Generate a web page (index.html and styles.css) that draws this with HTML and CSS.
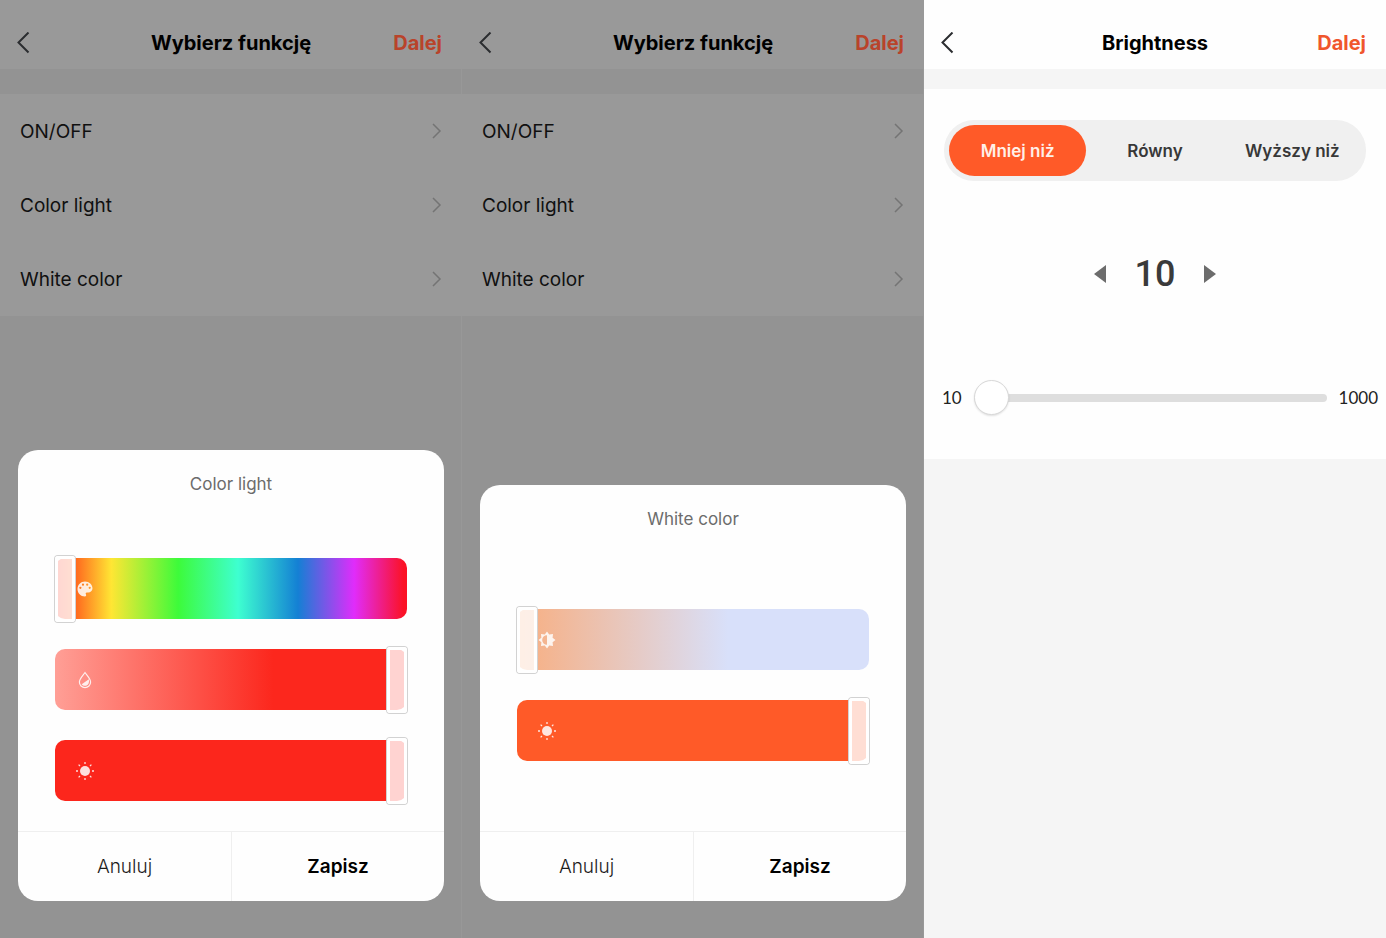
FILE: index.html
```html
<!DOCTYPE html>
<html lang="pl">
<head>
    <meta charset="UTF-8">
    <meta name="viewport" content="width=device-width, initial-scale=1.0">
    <title>Wybierz funkcję</title>
    <link rel="stylesheet" href="styles.css">
</head>
<body>
    <main class="screens">
        <section class="screen dimmed">
            <header class="topbar">
                <button type="button" class="back" aria-label="Wstecz">
                    <svg width="14" height="22" viewBox="0 0 14 22"><path d="M12.500 0.500 2.500 10.500l10 10"/></svg>
                </button>
                <h1>Wybierz funkcję</h1>
                <button type="button" class="next">Dalej</button>
            </header>
            <nav class="functions">
                <a href="#">ON/OFF <svg width="10" height="16" viewBox="0 0 10 16"><path d="m1 1 7 7-7 7"/></svg></a>
                <a href="#">Color light <svg width="10" height="16" viewBox="0 0 10 16"><path d="m1 1 7 7-7 7"/></svg></a>
                <a href="#">White color <svg width="10" height="16" viewBox="0 0 10 16"><path d="m1 1 7 7-7 7"/></svg></a>
            </nav>

            <form class="sheet">
                <h2>Color light</h2>
                <div class="sliders">
                    <div class="bar hue">
                        <svg class="bar-icon near" width="20" height="20" viewBox="0 0 20 20">
                            <path fill-rule="evenodd" d="M10 2.500c4.200 0 7.500 3 7.500 6.800 0 2.600-2 4.200-4.300 4.200h-1.400c-1 0-1.400.9-.9 1.700.6 1.100.2 2.300-1 2.300-4.200 0-7.400-3.300-7.400-7.500s3.300-7.500 7.500-7.500zM5.400 7.700a1.100 1.100 0 1 0 0 2.200 1.100 1.100 0 0 0 0-2.200zM8 4.600a1.100 1.100 0 1 0 0 2.200 1.100 1.100 0 0 0 0-2.200zm4.200 0a1.100 1.100 0 1 0 0 2.200 1.100 1.100 0 0 0 0-2.200zm2.500 3.100a1.100 1.100 0 1 0 0 2.200 1.100 1.100 0 0 0 0-2.200z"/>
                        </svg>
                        <input type="range" min="0" max="360" value="0" aria-label="Kolor">
                    </div>
                    <div class="bar saturation">
                        <svg class="bar-icon" width="20" height="20" viewBox="0 0 20 20">
                            <path class="line" d="M10 2.500c2.600 3.500 5.600 6.300 5.600 9.500a5.600 5.600 0 0 1-11.200 0c0-3.200 3-6 5.600-9.500z"/>
                            <path d="M13.900 9.200c.6 3.900-.9 6.600-3.900 6.600-1.400 0-2.600-.6-3.300-1.600z"/>
                        </svg>
                        <input type="range" min="0" max="1000" value="1000" aria-label="Nasycenie">
                    </div>
                    <div class="bar red">
                        <svg class="bar-icon" width="20" height="20" viewBox="0 0 20 20">
                            <circle cx="10" cy="10" r="5"/>
                            <path class="rays" d="M10 1v2M10 17v2M1 10h2M17 10h2M3.600 3.600 5 5M15 15l1.400 1.400M3.600 16.400 5 15M15 5l1.400-1.400"/>
                        </svg>
                        <input type="range" min="0" max="1000" value="1000" aria-label="Jasność">
                    </div>
                </div>
                <div class="actions">
                    <button type="button">Anuluj</button>
                    <button type="submit" class="save">Zapisz</button>
                </div>
            </form>
        </section>

        <section class="screen dimmed">
            <header class="topbar">
                <button type="button" class="back" aria-label="Wstecz">
                    <svg width="14" height="22" viewBox="0 0 14 22"><path d="M12.500 0.500 2.500 10.500l10 10"/></svg>
                </button>
                <h1>Wybierz funkcję</h1>
                <button type="button" class="next">Dalej</button>
            </header>
            <nav class="functions">
                <a href="#">ON/OFF <svg width="10" height="16" viewBox="0 0 10 16"><path d="m1 1 7 7-7 7"/></svg></a>
                <a href="#">Color light <svg width="10" height="16" viewBox="0 0 10 16"><path d="m1 1 7 7-7 7"/></svg></a>
                <a href="#">White color <svg width="10" height="16" viewBox="0 0 10 16"><path d="m1 1 7 7-7 7"/></svg></a>
            </nav>

            <form class="sheet">
                <h2>White color</h2>
                <div class="sliders roomy">
                    <div class="bar temperature">
                        <svg class="bar-icon near" width="20" height="20" viewBox="0 0 20 20">
                            <path fill-rule="evenodd" d="m10 1.500 2.200 2.900 3.800-.4-.4 3.800 2.900 2.200-2.900 2.200.4 3.800-3.800-.4L10 18.500l-2.200-2.900-3.800.4.4-3.800L1.500 10l2.900-2.200L4 4l3.800.4zM10 5.200a4.800 4.800 0 0 0 0 9.600z"/>
                        </svg>
                        <input type="range" min="0" max="1000" value="0" aria-label="Temperatura barwowa">
                    </div>
                    <div class="bar orange">
                        <svg class="bar-icon" width="20" height="20" viewBox="0 0 20 20">
                            <circle cx="10" cy="10" r="5"/>
                            <path class="rays" d="M10 1v2M10 17v2M1 10h2M17 10h2M3.600 3.600 5 5M15 15l1.400 1.400M3.600 16.400 5 15M15 5l1.400-1.400"/>
                        </svg>
                        <input type="range" min="0" max="1000" value="1000" aria-label="Jasność">
                    </div>
                </div>
                <div class="actions">
                    <button type="button">Anuluj</button>
                    <button type="submit" class="save">Zapisz</button>
                </div>
            </form>
        </section>

        <section class="screen">
            <header class="topbar">
                <button type="button" class="back" aria-label="Wstecz">
                    <svg width="14" height="22" viewBox="0 0 14 22"><path d="M12.500 0.500 2.500 10.500l10 10"/></svg>
                </button>
                <h1>Brightness</h1>
                <button type="button" class="next">Dalej</button>
            </header>
            <form class="brightness">
                <div class="compare">
                    <button type="button" class="active">Mniej niż</button>
                    <button type="button">Równy</button>
                    <button type="button">Wyższy niż</button>
                </div>
                <div class="stepper">
                    <button type="button" aria-label="Mniej">
                        <svg width="12" height="18" viewBox="0 0 12 18"><path d="M12 0v18L0 9z"/></svg>
                    </button>
                    <output for="level">10</output>
                    <button type="button" aria-label="Więcej">
                        <svg width="12" height="18" viewBox="0 0 12 18"><path d="M0 0v18l12-9z"/></svg>
                    </button>
                </div>
                <div class="level">
                    <label for="level">10</label>
                    <input type="range" id="level" min="10" max="1000" value="10">
                    <span>1000</span>
                </div>
            </form>
        </section>
    </main>
</body>
</html>
```
FILE: styles.css
```css
* {
    box-sizing: border-box;
}

body {
    margin: 0;
    font-family: Inter, 'Liberation Sans', sans-serif;
    color: #000;
    background: #f5f5f5;
}

button {
    padding: 0;
    border: none;
    background: none;
    font-family: inherit;
    color: inherit;
    cursor: pointer;
}

.screens {
    display: grid;
    grid-template-columns: repeat(3, 1fr);
    min-height: 100vh;
}

.screen {
    display: flex;
    flex-direction: column;
    background: #f5f5f5;
}

/* top bar */
.topbar {
    display: grid;
    grid-template-columns: 1fr auto 1fr;
    align-items: center;
    height: 69px;
    padding: 17px 16px 0;
    background: #fefefe;
}

.topbar h1 {
    margin: 0;
    font-size: 20px;
    line-height: 28px;
    font-weight: 700;
}

.back {
    justify-self: start;
    display: flex;
}

.back svg {
    fill: none;
    stroke: #2b2d30;
    stroke-width: 2;
}

.next {
    justify-self: end;
    padding-right: 4px;
    font-size: 20px;
    line-height: 28px;
    font-weight: 700;
    color: #f0562c;
}

/* screens behind an open sheet */
.dimmed {
    background: #939393;
    box-shadow: inset -1px 0 #989898;
}

.dimmed .topbar {
    background: #999;
}

.dimmed .next {
    color: #b9432a;
}

.functions {
    margin-top: 25px;
    background: #999;
}

.functions a {
    display: flex;
    align-items: center;
    justify-content: space-between;
    height: 74px;
    padding: 0 20px;
    font-size: 19px;
    color: #101010;
    text-decoration: none;
}

.functions svg {
    fill: none;
    stroke: #747474;
    stroke-width: 1.5;
}

/* bottom sheet */
.sheet {
    margin: auto 18px 37px;
    border-radius: 20px;
    background: #fefefe;
    overflow: hidden;
}

.sheet h2 {
    margin: 0;
    font-size: 17px;
    line-height: 68px;
    font-weight: 400;
    text-align: center;
    color: #6c6c6c;
}

.sliders {
    display: grid;
    gap: 30px;
    padding: 40px 37px 30px;
}

.sliders.roomy {
    padding: 56px 37px 70px;
}

.bar {
    position: relative;
    display: flex;
    align-items: center;
    height: 61px;
    border-radius: 10px;
}

.hue {
    background: linear-gradient(90deg, #ff2d1e, #ff6a1f 6%, #ffe634 16%, #3dfb3a 35%, #3effd0 52%, #1480d4 69%, #e02cfb 85%, #fb1226 99%);
}

.saturation {
    background: linear-gradient(90deg, #ff9f96, #fc271d 62%);
}

.red {
    background: #fc261c;
}

.temperature {
    background: linear-gradient(90deg, #f8ae80, #d8e0fa 60%);
}

.orange {
    background: #ff5a28;
}

.bar input {
    -webkit-appearance: none;
    appearance: none;
    flex: 1;
    width: 100%;
    height: 67px;
    margin: 0;
    background: none;
}

.bar input::-webkit-slider-thumb {
    -webkit-appearance: none;
    width: 20px;
    height: 66px;
    border: 3px solid #fff;
    border-radius: 3px;
    background: rgba(255, 255, 255, 0.8);
    background-clip: padding-box;
    box-shadow: 0 0 0 1px #d2d2d2;
}

.bar-icon {
    position: absolute;
    left: 20px;
    fill: #fff;
    opacity: 0.85;
    pointer-events: none;
}

.bar-icon .line {
    fill: none;
    stroke: #fff;
    stroke-width: 1.2;
}

.bar-icon .rays {
    stroke: #fff;
    stroke-width: 1.3;
}

.actions {
    display: grid;
    grid-template-columns: 1fr 1fr;
    border-top: 1px solid #efefef;
}

.actions button {
    height: 69px;
    font-size: 19px;
    font-weight: 300;
    color: #1c1c1c;
}

.actions .save {
    border-left: 1px solid #efefef;
    font-weight: 600;
    color: #000;
}

/* brightness screen */
.brightness {
    margin-top: 20px;
    padding: 31px 0 44px;
    background: #fefefe;
}

.compare {
    display: grid;
    grid-template-columns: repeat(3, 1fr);
    margin: 0 20px;
    padding: 5px;
    border-radius: 30px;
    background: #f0f0f0;
}

.compare button {
    height: 51px;
    border-radius: 26px;
    font-size: 17px;
    font-weight: 600;
    color: #383838;
}

.compare .active {
    color: #fff0e8;
    background: #ff5a28;
}

.stepper {
    display: flex;
    align-items: center;
    justify-content: center;
    gap: 29px;
    margin-top: 71px;
}

.stepper button {
    display: flex;
}

.stepper svg {
    fill: #6c6c6c;
}

.stepper output {
    font-family: Roboto, sans-serif;
    font-size: 36px;
    line-height: 44px;
    font-weight: 500;
    color: #3a3a3a;
}

.level {
    display: flex;
    align-items: center;
    gap: 12px;
    margin-top: 84px;
    padding: 0 8px 0 18px;
    font-family: Lato, sans-serif;
    font-size: 17px;
    color: #222;
}

.level input {
    -webkit-appearance: none;
    appearance: none;
    flex: 1;
    min-width: 0;
    height: 35px;
    margin: 0;
    background: none;
}

.level input::-webkit-slider-runnable-track {
    height: 8px;
    border-radius: 4px;
    background: #dedede;
}

.level input::-webkit-slider-thumb {
    -webkit-appearance: none;
    width: 35px;
    height: 35px;
    margin-top: -14px;
    border: 1px solid #d8d8d8;
    border-radius: 50%;
    background: #fff;
    box-shadow: 0 1px 2px rgba(0, 0, 0, 0.12);
}
```
